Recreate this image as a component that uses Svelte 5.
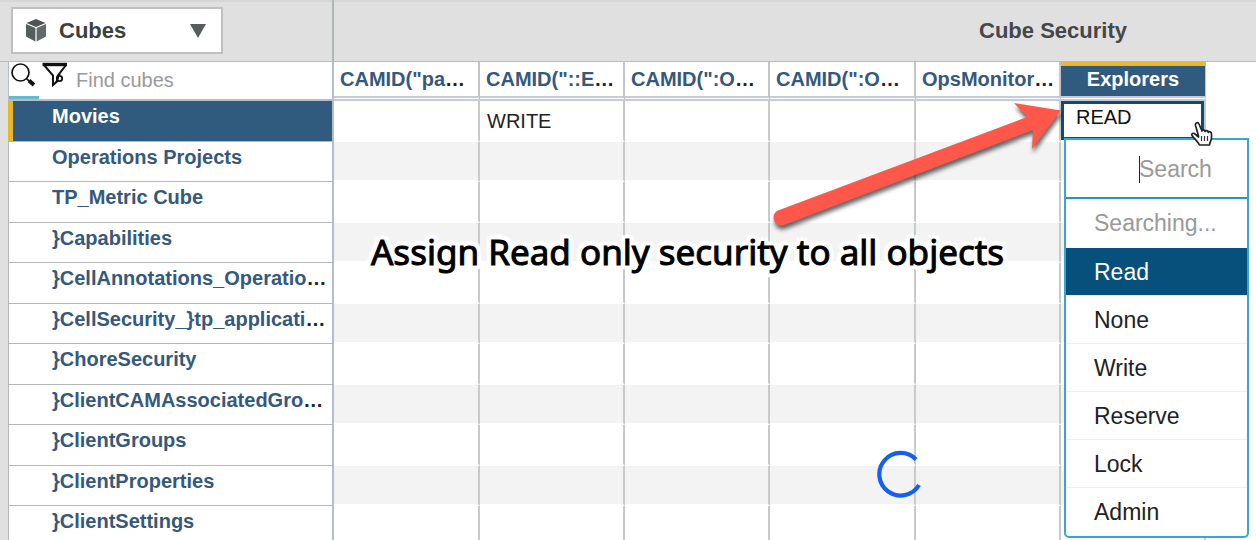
<script lang="ts">
  type Label = { text: string; cut?: boolean };

  const groups: Label[] = [
    { text: 'CAMID("pa', cut: true },
    { text: 'CAMID("::E', cut: true },
    { text: 'CAMID(":O', cut: true },
    { text: 'CAMID(":O', cut: true },
    { text: "OpsMonitor", cut: true },
  ];

  const cubes: Label[] = [
    { text: "Movies" },
    { text: "Operations Projects" },
    { text: "TP_Metric Cube" },
    { text: "}Capabilities" },
    { text: "}CellAnnotations_Operatio", cut: true },
    { text: "}CellSecurity_}tp_applicati", cut: true },
    { text: "}ChoreSecurity" },
    { text: "}ClientCAMAssociatedGro", cut: true },
    { text: "}ClientGroups" },
    { text: "}ClientProperties" },
    { text: "}ClientSettings" },
  ];

  const options = ["Read", "None", "Write", "Reserve", "Lock", "Admin"];

  let access = $state("Read");
  let find = $state("");
  let search = $state("");
</script>

{#snippet label(item: Label)}
  <span>{item.text}</span>{#if item.cut}<span class="dots">…</span>{/if}
{/snippet}

<main>
  <header>
    <div class="picker">
      <button class="cubes">
        <svg width="22" height="24" viewBox="0 0 22 24" aria-hidden="true">
          <path d="M11 0 20.500 4 11 8 1.500 4Z" fill="#4d5454" />
          <path d="M1 5 10.400 9V22.500L1 17.500Z" fill="#555d5d" />
          <path d="M21 5 11.600 9V22.500L21 17.500Z" fill="#626a6a" />
        </svg>
        <span>Cubes</span>
        <svg class="down" width="18" height="16" viewBox="0 0 18 16" aria-hidden="true">
          <path d="M1 1H17L9 15Z" fill="#555d5d" />
        </svg>
      </button>
    </div>
    <div class="title"><h1>Cube Security</h1></div>
  </header>

  <div class="grid">
    <table>
      <colgroup>
        <col class="names" />
        <col class="wide" />
        <col class="group" span="2" />
        <col class="wide" />
        <col class="group" span="2" />
        <col />
      </colgroup>
      <thead>
        <tr>
          <th class="find">
            <div class="find-row">
              <button class="icon active" aria-label="Search">
                <svg width="30" height="34" viewBox="0 0 30 34" fill="none" stroke="#111">
                  <circle cx="11.500" cy="10.500" r="8.500" stroke-width="1.700" />
                  <path d="M17.500 16.500 20 19" stroke-width="1.700" />
                  <path d="M20 18.500 25 23" stroke-width="4" />
                </svg>
              </button>
              <button class="icon" aria-label="Filter">
                <svg width="30" height="34" viewBox="0 0 30 34" fill="none" stroke="#111">
                  <path d="M3.500 2.500H28" stroke-width="3.400" />
                  <path d="M5 3 14 13.500V23L18.500 19V14L27 3" stroke-width="2" />
                  <circle cx="20.500" cy="16.500" r="2.700" stroke-width="1.800" />
                  <path d="M21 11.500 17 20" stroke-width="1.600" />
                </svg>
              </button>
              <input aria-label="Find cubes" placeholder="Find cubes" bind:value={find} />
            </div>
          </th>
          {#each groups as group}
            <th class="head" scope="col">{@render label(group)}</th>
          {/each}
          <th class="head current" scope="col">Explorers</th>
          <td class="rest"></td>
        </tr>
      </thead>
      <tbody>
        {#each cubes as cube, i}
          <tr>
            <th class="name" class:selected={i === 0} scope="row">{@render label(cube)}</th>
            {#each groups as _, j}
              <td class="cell">{i === 0 && j === 1 ? "WRITE" : ""}</td>
            {/each}
            <td class="cell" class:editing={i === 0}>
              {#if i === 0}
                <button class="value" aria-expanded="true">{access.toUpperCase()}</button>
                <div class="menu">
                  <div class="search">
                    <input aria-label="Search" placeholder="Search" bind:value={search} />
                    <span class="caret"></span>
                  </div>
                  <p>Searching...</p>
                  {#each options as option}
                    <button class="option" class:chosen={option === access} onclick={() => (access = option)}>
                      {option}
                    </button>
                  {/each}
                </div>
                <svg class="hand" width="24" height="26" viewBox="0 0 24 26" aria-hidden="true">
                  <path
                    d="M8.500 15 5.500 4.500C5 1.500 8 .500 9 3L12 10C12.500 8.500 14.500 8.500 15 10.500 16 9 18 9.500 18.200 11.300 19.500 10 21.500 11 21.500 13V17C21.500 19 20 20.500 19.500 24H9.500C8 20.500 4 17.500 2 14.500 1.200 12.500 3.500 11.500 5 13L8.500 16Z"
                    fill="#fff" stroke="#222" stroke-width="1.700" stroke-linejoin="round"
                  />
                  <path d="M11.500 15V20M14.500 15V20M17.500 15V20" stroke="#333" stroke-width="1.200" />
                </svg>
              {/if}
            </td>
            <td class="rest"></td>
          </tr>
        {/each}
      </tbody>
    </table>

    <svg class="arrow" width="310" height="140" viewBox="0 0 310 140" aria-hidden="true">
      <path
        d="M18 120.500 267 27 254 13 301 20.500 272 59 273 40 24 135C15 138 9 125 18 120.500Z"
        fill="#ff584a"
      />
    </svg>
    <div class="caption">Assign Read only security to all objects</div>
    <svg class="spinner" width="48" height="48" viewBox="0 0 48 48" role="img" aria-label="Loading">
      <path d="M39 9.500A21.300 21.300 0 1 0 42 35" fill="none" stroke="#1461f0" stroke-width="4.200" />
    </svg>
  </div>
</main>

<style>
  :global(body) {
    margin: 0;
    background: #fff;
  }
  main {
    height: 100vh;
    overflow: hidden;
    font-family: "Liberation Sans", Arial, sans-serif;
    font-size: 20px;
    line-height: 24px;
    color: #222;
  }
  button, input {
    font: inherit;
    color: inherit;
    margin: 0;
    padding: 0;
    border: 0;
    border-radius: 0;
    background: none;
    box-sizing: border-box;
  }
  header {
    display: flex;
    height: 61px;
    background: #e0e0e0;
    border-bottom: 1px solid #b8bbbb;
    box-shadow: inset 0 2px #d6d6d6;
    overflow: hidden;
  }
  .picker {
    box-sizing: border-box;
    flex: 0 0 334px;
    padding: 7px 0 0 11px;
    border-right: 2px solid #b0b6b6;
  }
  .cubes {
    display: flex;
    align-items: center;
    gap: 12px;
    width: 212px;
    height: 47px;
    padding: 0 14px 0 12px;
    background: #fff;
    border: 2px solid #bfc1c1;
    color: #3b3f40;
    font-size: 22px;
    font-weight: bold;
    text-align: left;
  }
  .cubes svg { flex: none; }
  .cubes span { flex: 1; }
  .title {
    flex: 0 0 1438px;
    display: flex;
    align-items: center;
    justify-content: center;
  }
  h1 {
    margin: 0;
    font-size: 22px;
    color: #444849;
  }

  .grid {
    position: relative;
    padding-left: 8px;
    background: #e0e0e0;
  }
  table {
    width: 100%;
    table-layout: fixed;
    border-spacing: 0;
    background: #fff;
  }
  th, td {
    box-sizing: border-box;
    padding: 0;
    white-space: nowrap;
    text-align: left;
  }
  .names { width: 326px; }
  .wide { width: 146px; }
  .group { width: 145px; }
  .find {
    border: solid #b4bdcb;
    border-width: 0 2px 2px 1px;
    font-weight: normal;
  }
  .find-row {
    display: flex;
    height: 37px;
  }
  .icon {
    flex: 0 0 30px;
    border-bottom: 3px solid transparent;
  }
  .icon svg { display: block; }
  .active { border-color: #65b9cb; }
  .find input {
    flex: 1;
    min-width: 0;
    padding: 0 0 2px 7px;
    outline: 0;
  }
  input::placeholder {
    color: #999;
    opacity: 1;
  }
  .head {
    height: 39px;
    padding: 0 0 0 6px;
    border-right: 2px solid #c2c5ca;
    border-bottom: 5px double #c6cadd;
    color: #35597c;
  }
  .dots { color: #222; }
  .current {
    padding: 0 0 4px;
    border-top: 4px solid #e9b72c;
    border-right: 1px solid #c2c5ca;
    background: #315b7e;
    background-clip: padding-box;
    color: #fff;
    text-align: center;
  }
  tbody tr { height: 41px; }
  tbody tr:nth-child(even) { height: 40px; }
  .name {
    padding: 3px 0 0 43px;
    vertical-align: top;
    border: solid #b4b7ba;
    border-width: 0 2px 1px 1px;
    border-right-color: #b4bdcb;
    color: #35597c;
  }
  .selected {
    padding-left: 39px;
    border-left: 5px solid #e9b72c;
    background: #315b7e;
    color: #fff;
  }
  .cell {
    padding-left: 7px;
    border-right: 2px solid #c8c9cb;
    border-bottom: 2px solid #fff;
  }
  tr:nth-child(even) .cell { background: #f3f3f3; }
  .editing {
    position: relative;
    padding: 0;
    vertical-align: top;
  }
  .value {
    display: block;
    width: 100%;
    height: 39px;
    padding: 0 0 8px 12px;
    border: 3px solid #104c70;
    color: #111;
    text-align: left;
  }
  .menu {
    position: absolute;
    z-index: 1;
    top: 37px;
    left: 3px;
    box-sizing: border-box;
    width: 185px;
    border: 2px solid #3aa5cd;
    border-radius: 0 0 5px 5px;
    background: #fff;
    font-size: 23px;
  }
  .search {
    position: relative;
    height: 57px;
    border-bottom: 2px solid #2494c0;
  }
  .search input {
    width: 100%;
    height: 59px;
    padding-left: 73px;
    outline: 0;
  }
  .caret {
    position: absolute;
    top: 16px;
    left: 73px;
    width: 1px;
    height: 27px;
    background: #222;
  }
  .menu p {
    margin: 0;
    padding-left: 28px;
    line-height: 49px;
    color: #999;
  }
  .option {
    display: block;
    width: 100%;
    height: 48px;
    padding-left: 28px;
    border-bottom: 1px solid #ededed;
    text-align: left;
  }
  .option:last-child { border-bottom: 0; }
  .chosen {
    background: #08507c;
    color: #fff;
  }
  .hand {
    position: absolute;
    z-index: 2;
    top: 20px;
    left: 129px;
  }

  .arrow, .caption, .spinner {
    position: absolute;
    pointer-events: none;
  }
  .arrow {
    top: 28px;
    left: 760px;
    filter: drop-shadow(1px 4px 2px #0009);
  }
  .caption {
    top: 166px;
    left: 371px;
    font-family: "Noto Sans", "Open Sans", sans-serif;
    font-size: 35px;
    line-height: 48px;
    white-space: nowrap;
    color: #000;
    -webkit-text-stroke: 1px #000;
    text-shadow:
      5px 0 1px #fff, -5px 0 1px #fff, 0 5px 1px #fff, 0 -5px 1px #fff,
      4px 4px 1px #fff, -4px 4px 1px #fff, 4px -4px 1px #fff, -4px -4px 1px #fff,
      2px 2px 1px #fff, -2px 2px 1px #fff, 2px -2px 1px #fff, -2px -2px 1px #fff;
  }
  .spinner {
    top: 388px;
    left: 877px;
  }
</style>
